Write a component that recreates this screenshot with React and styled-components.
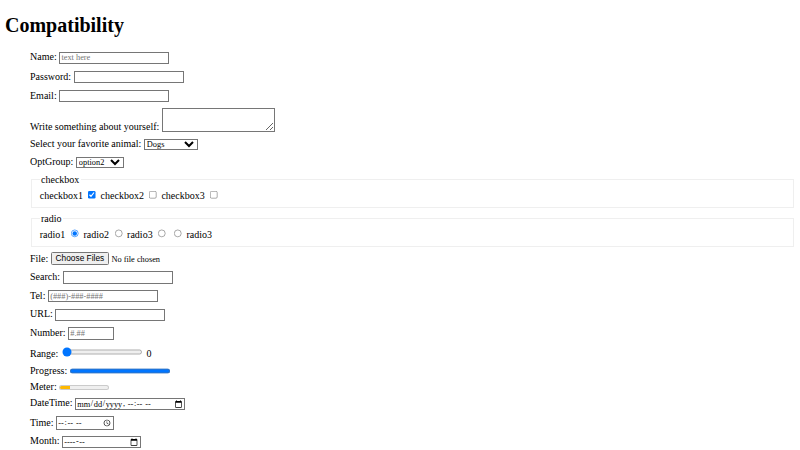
import React from "react";
import styled, { createGlobalStyle } from "styled-components";

const Global = createGlobalStyle`
  html { zoom: 0.625; }
  body { font-family: "Liberation Serif", "Times New Roman", serif; }
  input, select, textarea {
    font-family: "Liberation Serif", "Times New Roman", serif;
  }
  input::file-selector-button {
    font-family: "Liberation Sans", Arial, sans-serif;
  }
`;

const Title = styled.h1`
  font-family: "Liberation Serif", "Times New Roman", serif;
  font-size: 2em;
  font-weight: bold;
  margin: 15px 0 22.5px;
`;

const Form = styled.form`
  margin: 0 0 0 40px;
`;

const Row = styled.div`
  margin-bottom: ${(p) => p.$gap ?? 9.6}px;
`;

const Group = styled.fieldset`
  margin: 0 2px 8px;
`;

const Field = styled.input`
  box-sizing: border-box;
  width: ${(p) => p.$w || 176}px;
`;

const Area = styled.textarea`
  box-sizing: border-box;
  width: 181px;
  height: 37px;
  vertical-align: -2px;
`;

const Picker = styled.select`
  box-sizing: border-box;
  width: ${(p) => p.$w}px;
`;

const Option = ({ children, ...p }) => <option {...p}>{children}</option>;

export default function App() {
  return (
    <>
      <Global />
      <Title>Compatibility</Title>
      <Form onSubmit={(e) => e.preventDefault()}>
        <Row $gap={10.5}>
          Name: <Field type="text" placeholder="text here" />
        </Row>
        <Row $gap={10.5}>
          Password: <Field type="password" />
        </Row>
        <Row>
          Email: <Field type="email" />
        </Row>
        <Row>
          Write something about yourself: <Area />
        </Row>
        <Row>
          Select your favorite animal:{" "}
          <Picker $w={86} defaultValue="Dogs">
            <Option>Dogs</Option>
            <Option>Cats</Option>
            <Option>Hamsters</Option>
          </Picker>
        </Row>
        <Row>
          OptGroup:{" "}
          <Picker $w={77} defaultValue="option2">
            <optgroup label="Group 1">
              <Option>option1</Option>
              <Option>option2</Option>
            </optgroup>
            <optgroup label="Group 2">
              <Option>option3</Option>
            </optgroup>
          </Picker>
        </Row>
        <Group>
          <legend>checkbox</legend>
          checkbox1 <input type="checkbox" defaultChecked /> checkbox2{" "}
          <input type="checkbox" /> checkbox3 <input type="checkbox" />
        </Group>
        <Group>
          <legend>radio</legend>
          radio1 <input type="radio" name="r" defaultChecked /> radio2{" "}
          <input type="radio" name="r" /> radio3 <input type="radio" name="r" />{" "}
          <input type="radio" name="r" /> radio3
        </Group>
        <Row>
          File: <input type="file" multiple />
        </Row>
        <Row>
          Search: <Field type="search" />
        </Row>
        <Row>
          Tel: <Field type="tel" placeholder="(###)-###-####" />
        </Row>
        <Row>
          URL: <Field type="url" />
        </Row>
        <Row>
          Number: <Field $w={74} type="number" placeholder="#.##" min="0" max="10" step="0.01" />
        </Row>
        <Row>
          Range: <input type="range" min="0" max="100" defaultValue="0" /> 0
        </Row>
        <Row $gap={8.5}>
          Progress: <progress value="100" max="100" />
        </Row>
        <Row $gap={8.5}>
          Meter:{" "}
          <meter value="0.2" min="0" max="1" low="0.25" high="0.75" optimum="0.5" />
        </Row>
        <Row $gap={8.5}>
          DateTime: <Field type="datetime-local" />
        </Row>
        <Row $gap={8.5}>
          Time: <Field $w={93} type="time" />
        </Row>
        <Row $gap={0}>
          Month: <Field $w={126} type="month" />
        </Row>
      </Form>
    </>
  );
}
